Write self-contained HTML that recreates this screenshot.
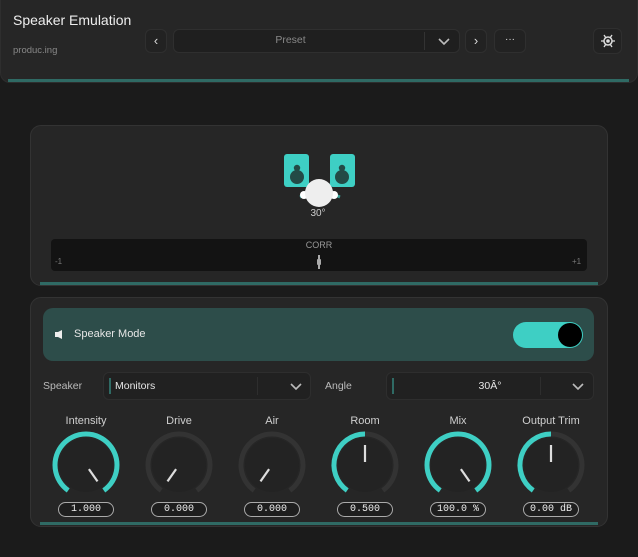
<!DOCTYPE html>
<html><head><meta charset="utf-8"><style>
*{margin:0;padding:0;box-sizing:border-box}
body{width:638px;height:557px;background:#1b1b1b;font-family:"Liberation Sans",sans-serif;position:relative;overflow:hidden;color:#ddd}
.abs{position:absolute}
.hdr{left:0;top:0;width:638px;height:83px;background:#262626;border-radius:0 0 10px 10px;border:1px solid #2e2e2e;border-top:none}
.btn{background:#222;border:1px solid #2f2f2f;border-radius:6px;color:#ddd;text-align:center}
.panel{background:#262626;border:1px solid #333;border-radius:11px}
.tl{height:3px;background:#2f6a64}
.lbl{font-size:11px;color:#cfcfcf;text-align:center;width:90px}
.val{height:15px;width:56px;border:1.3px solid #aaa;border-radius:8px;font-family:"Liberation Mono",monospace;font-size:10px;color:#eee;text-align:center;line-height:13px;background:#1e1e1e}
.dd{background:#212121;border:1px solid #2e2e2e;border-radius:6px;height:28px}
</style></head><body>
<div class="abs hdr"></div>
<div class="abs" style="left:13px;top:12px;font-size:14px;color:#eee">Speaker Emulation</div>
<div class="abs" style="left:13px;top:45px;font-size:9.5px;color:#888">produc.ing</div>
<div class="abs btn" style="left:145px;top:29px;width:22px;height:24px;line-height:22px;font-size:13px">‹</div>
<div class="abs btn" style="left:173px;top:29px;width:287px;height:24px;background:#1f1f1f"></div>
<div class="abs" style="left:173px;top:34px;width:235px;text-align:center;font-size:10.5px;color:#888;line-height:13px;padding-top:0px"><span style="position:relative;top:0px">Preset</span></div>
<div class="abs" style="left:424px;top:32px;width:1px;height:18px;background:#333"></div>
<svg class="abs" style="left:437px;top:37px" width="14" height="9"><path d="M2 2 L7 7 L12 2" stroke="#bbb" stroke-width="1.6" fill="none"/></svg>
<div class="abs btn" style="left:465px;top:29px;width:22px;height:24px;line-height:22px;font-size:13px">›</div>
<div class="abs btn" style="left:494px;top:29px;width:32px;height:24px;line-height:20px;font-size:10px">···</div>
<div class="abs btn" style="left:593px;top:28px;width:29px;height:26px"></div>
<svg class="abs" style="left:598px;top:32px" width="20" height="18"><circle cx="10" cy="9" r="4" fill="none" stroke="#ddd" stroke-width="1.5"/><circle cx="10" cy="9" r="1.8" fill="#ddd"/><path d="M3 9h3M14 9h3M6 3l2 3M14 3l-2 3M6 15l2-3M14 15l-2-3" stroke="#ddd" stroke-width="1.3"/></svg>
<div class="abs tl" style="left:8px;top:79px;width:621px"></div>

<div class="abs panel" style="left:30px;top:125px;width:578px;height:161px"></div>
<svg class="abs" style="left:270px;top:145px" width="100" height="75">
<path d="M30 36 L70 52 M70 36 L30 52" stroke="#3a9e96" stroke-width="3"/>
<rect x="14" y="9" width="25" height="33" rx="3" fill="#3ecfc4"/>
<rect x="60" y="9" width="25" height="33" rx="3" fill="#3ecfc4"/>
<circle cx="27" cy="32" r="7" fill="#234a46"/><circle cx="27" cy="23" r="3.2" fill="#234a46"/><rect x="26" y="23" width="2" height="6" fill="#234a46"/>
<circle cx="72" cy="32" r="7" fill="#234a46"/><circle cx="72" cy="23" r="3.2" fill="#234a46"/><rect x="71" y="23" width="2" height="6" fill="#234a46"/>
<circle cx="34" cy="50" r="4" fill="#fff"/><circle cx="64" cy="50" r="4" fill="#fff"/>
<circle cx="49" cy="48" r="14" fill="#eee"/>
</svg>
<div class="abs" style="left:298px;top:208px;width:40px;text-align:center;font-size:10px;color:#ccc">30°</div>
<div class="abs" style="left:51px;top:239px;width:536px;height:32px;background:#131313;border-radius:4px"></div>
<div class="abs" style="left:51px;top:240px;width:536px;text-align:center;font-size:9px;color:#999">CORR</div>
<div class="abs" style="left:55px;top:257px;font-size:8px;color:#777">-1</div>
<div class="abs" style="left:572px;top:257px;font-size:8px;color:#777">+1</div>
<div class="abs" style="left:318px;top:255px;width:2px;height:14px;background:#aaa"></div>
<div class="abs" style="left:317px;top:259px;width:4px;height:6px;background:#aaa;border-radius:1px"></div>
<div class="abs tl" style="left:40px;top:282px;width:558px"></div>

<div class="abs panel" style="left:30px;top:297px;width:578px;height:230px"></div>
<div class="abs" style="left:43px;top:308px;width:551px;height:53px;background:#2d4d4a;border-radius:10px"></div>
<svg class="abs" style="left:54px;top:329px" width="10" height="11"><rect x="1" y="3" width="3" height="5" fill="#eee"/><path d="M4 3 L8 1 V10 L4 8Z" fill="#eee"/></svg>
<div class="abs" style="left:74px;top:328px;font-size:11px;color:#e6e6e6">Speaker Mode</div>
<div class="abs" style="left:513px;top:322px;width:70px;height:26px;background:#3ecfc4;border-radius:13px"></div>
<div class="abs" style="left:558px;top:323px;width:24px;height:24px;background:#000;border-radius:50%"></div>

<div class="abs" style="left:43px;top:380px;font-size:10.5px;color:#bbb">Speaker</div>
<div class="abs dd" style="left:103px;top:372px;width:208px"></div>
<div class="abs" style="left:109px;top:378px;width:2px;height:16px;background:#2f6a64"></div>
<div class="abs" style="left:115px;top:380px;font-size:10.5px;color:#e6e6e6">Monitors</div>
<div class="abs" style="left:257px;top:377px;width:1px;height:18px;background:#2e2e2e"></div>
<svg class="abs" style="left:289px;top:382px" width="14" height="9"><path d="M2 2 L7 7 L12 2" stroke="#bbb" stroke-width="1.6" fill="none"/></svg>
<div class="abs" style="left:325px;top:380px;font-size:10.5px;color:#bbb">Angle</div>
<div class="abs dd" style="left:386px;top:372px;width:208px"></div>
<div class="abs" style="left:392px;top:378px;width:2px;height:16px;background:#2f6a64"></div>
<div class="abs" style="left:450px;top:380px;width:80px;text-align:center;font-size:10.5px;color:#e6e6e6">30Â°</div>
<div class="abs" style="left:540px;top:377px;width:1px;height:18px;background:#2e2e2e"></div>
<svg class="abs" style="left:571px;top:382px" width="14" height="9"><path d="M2 2 L7 7 L12 2" stroke="#bbb" stroke-width="1.6" fill="none"/></svg>

<div class="abs lbl" style="left:41px;top:415px">Intensity</div>
<div class="abs lbl" style="left:134px;top:415px">Drive</div>
<div class="abs lbl" style="left:227px;top:415px">Air</div>
<div class="abs lbl" style="left:320px;top:415px">Room</div>
<div class="abs lbl" style="left:413px;top:415px">Mix</div>
<div class="abs lbl" style="left:506px;top:415px">Output Trim</div>

<svg class="abs" style="left:0;top:0" width="638" height="557">
<defs><g id="bg"><path d="M-17.8 25.4 A31 31 0 1 1 17.8 25.4" stroke="#333" stroke-width="5" fill="none"/><circle r="27" fill="#232323"/></g></defs>
<g transform="translate(86,465)"><use href="#bg"/><path d="M-17.8 25.4 A31 31 0 1 1 17.8 25.4" stroke="#3ecfc4" stroke-width="5" fill="none"/><line x1="2.9" y1="4.1" x2="11.5" y2="16.4" stroke="#ddd" stroke-width="2.2"/></g>
<g transform="translate(179,465)"><use href="#bg"/><line x1="-2.9" y1="4.1" x2="-11.5" y2="16.4" stroke="#ddd" stroke-width="2.2"/></g>
<g transform="translate(272,465)"><use href="#bg"/><line x1="-2.9" y1="4.1" x2="-11.5" y2="16.4" stroke="#ddd" stroke-width="2.2"/></g>
<g transform="translate(365,465)"><use href="#bg"/><path d="M-17.8 25.4 A31 31 0 0 1 0 -31" stroke="#3ecfc4" stroke-width="5" fill="none"/><line x1="0" y1="-3" x2="0" y2="-20" stroke="#ddd" stroke-width="2.2"/></g>
<g transform="translate(458,465)"><use href="#bg"/><path d="M-17.8 25.4 A31 31 0 1 1 17.8 25.4" stroke="#3ecfc4" stroke-width="5" fill="none"/><line x1="2.9" y1="4.1" x2="11.5" y2="16.4" stroke="#ddd" stroke-width="2.2"/></g>
<g transform="translate(551,465)"><use href="#bg"/><path d="M-17.8 25.4 A31 31 0 0 1 0 -31" stroke="#3ecfc4" stroke-width="5" fill="none"/><line x1="0" y1="-3" x2="0" y2="-20" stroke="#ddd" stroke-width="2.2"/></g>
</svg>

<div class="abs val" style="left:58px;top:502px">1.000</div>
<div class="abs val" style="left:151px;top:502px">0.000</div>
<div class="abs val" style="left:244px;top:502px">0.000</div>
<div class="abs val" style="left:337px;top:502px">0.500</div>
<div class="abs val" style="left:430px;top:502px">100.0 %</div>
<div class="abs val" style="left:523px;top:502px">0.00 dB</div>
<div class="abs tl" style="left:40px;top:522px;width:558px"></div>
</body></html>
